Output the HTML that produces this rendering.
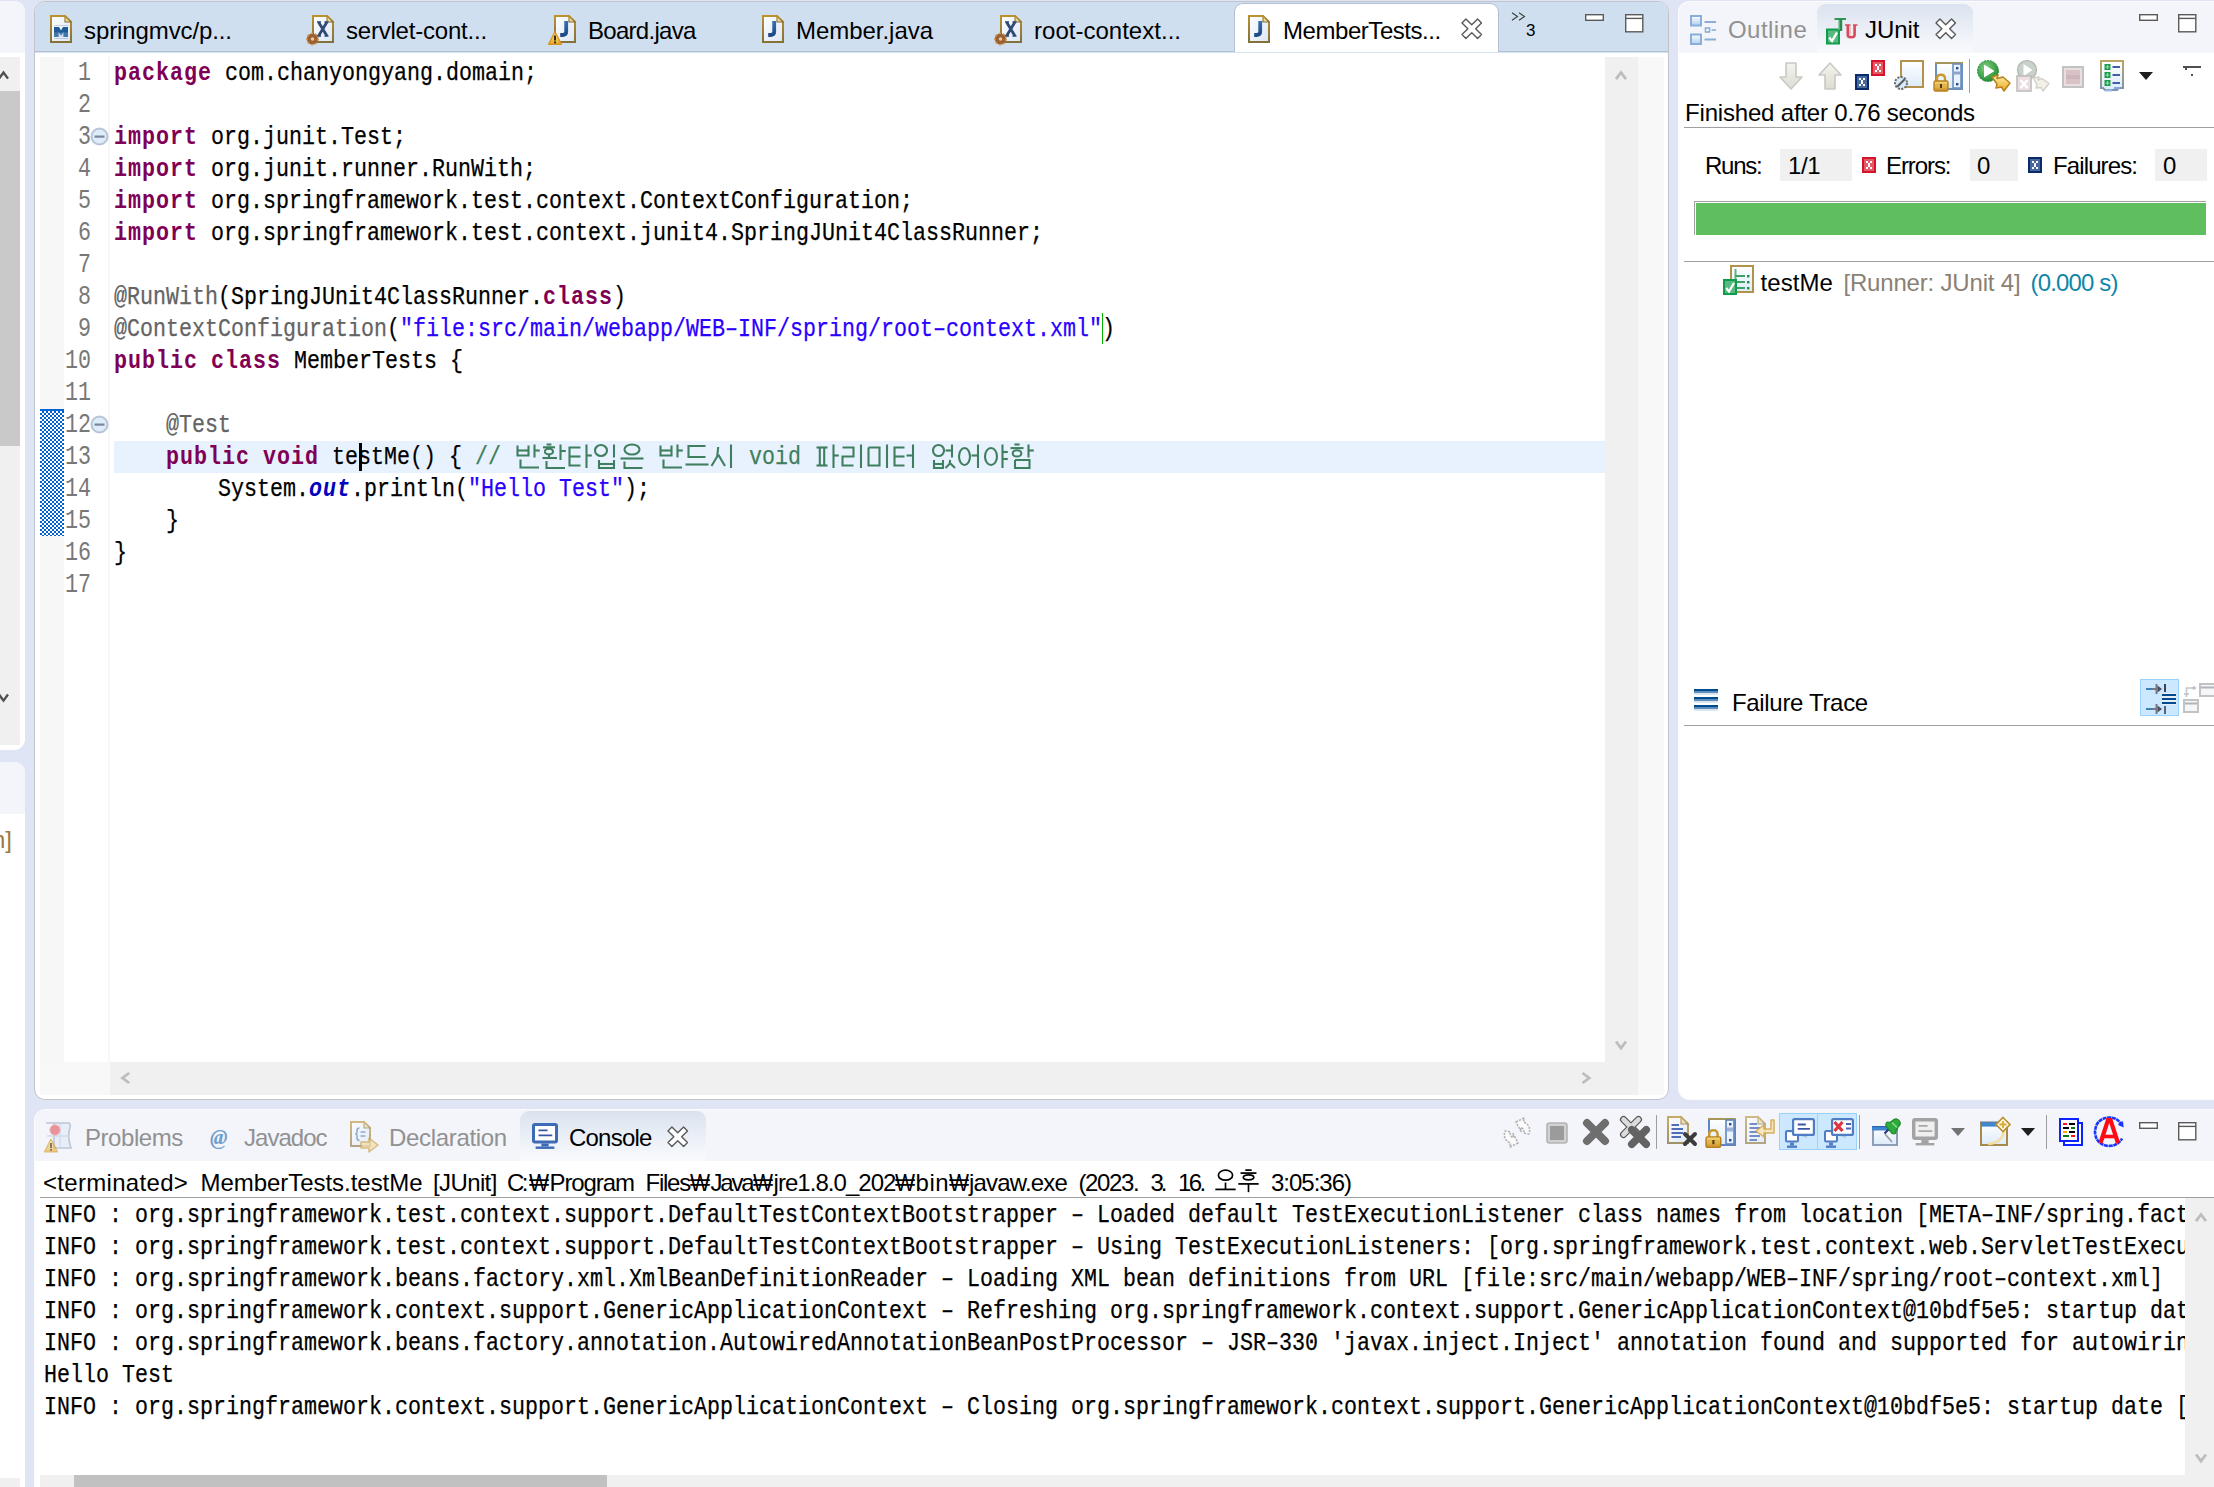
<!DOCTYPE html>
<html>
<head>
<meta charset="utf-8">
<title>Eclipse - MemberTests.java</title>
<style>
*{box-sizing:border-box;margin:0;padding:0}
html,body{width:2214px;height:1487px;overflow:hidden}
body{background:#e0e5f5;font-family:"Liberation Sans",sans-serif;font-size:24px;color:#000;position:relative}
.abs{position:absolute}
.t{position:absolute;white-space:pre;line-height:32px;height:32px}
.ui{font-family:"Liberation Sans",sans-serif;font-size:24px}
.gray{color:#919191}
svg{position:absolute;overflow:visible}
#ov{position:absolute;left:0;top:0;width:2214px;height:1487px;overflow:hidden}
.code{position:absolute;white-space:pre;font-family:"Liberation Mono",monospace;font-size:26px;line-height:32px;height:32px;transform:scaleX(.8332);transform-origin:0 0;color:#000;-webkit-text-stroke:.25px currentColor}
.kw{color:#7f0055;font-weight:bold;-webkit-text-stroke:0;letter-spacing:1.2px}
.ann{color:#646464}
.str{color:#2a00ff}
.cm{color:#3f7f5f}
.sf{color:#0000c0;font-style:italic;font-weight:bold;-webkit-text-stroke:0;letter-spacing:1.2px}
.ln{position:absolute;width:160px;text-align:right;white-space:pre;font-family:"Liberation Mono",monospace;font-size:28px;line-height:32px;height:32px;color:#787878;transform:scaleX(.7737);transform-origin:100% 0}
.hr{position:absolute;height:1px;background:#a0a0a0}
.sel{position:absolute;background:#cce8ff;border:1px solid #99d1ff}

</style>
</head>
<body>
<div class="abs" style="left:-12px;top:1px;width:37px;height:749px;background:#fff;border-radius:0 11px 11px 0;overflow:hidden"><div class="abs" style="left:0px;top:0px;width:37px;height:52px;background:#f3f5fb;"></div><div class="abs" style="left:0px;top:56px;width:32px;height:688px;background:#f0f0f0;"></div><div class="abs" style="left:0px;top:90px;width:32px;height:355px;background:#c9c9c9;"></div></div>
<div class="abs" style="left:-12px;top:762px;width:37px;height:740px;background:#fff;border-radius:0 11px 0 0;overflow:hidden"><div class="abs" style="left:0px;top:0px;width:37px;height:52px;background:#f3f5fb;"></div><div class="abs" style="left:0px;top:716px;width:32px;height:12px;background:#f0f0f0;"></div></div>
<div class="abs" style="left:34px;top:1px;width:1635px;height:1099px;background:#fff;border-radius:11px;border:1px solid #c2c4cc;overflow:hidden"><div class="abs" style="left:0px;top:0px;width:1635px;height:50px;background:#d0dff0;border-bottom:1px solid #b4bdd2"></div></div>
<div class="abs" style="left:35px;top:52px;width:1633px;height:1px;background:#d6e3f3;"></div>
<div class="abs" style="left:1234px;top:3px;width:265px;height:49px;background:#fff;border-radius:9px 9px 0 0;border:1px solid #b6bed2;border-bottom:none"></div>
<div class="abs" style="left:40px;top:57px;width:24px;height:1005px;background:#f7f7f7;"></div>
<div class="abs" style="left:108px;top:57px;width:2px;height:1005px;background:#f7f7f7;"></div>
<svg style="left:40px;top:409px" width="24" height="127" shape-rendering="crispEdges"><defs><pattern id="chk" width="4" height="4" patternUnits="userSpaceOnUse"><rect width="4" height="4" fill="#fffbee"/><rect width="2" height="2" fill="#0060d2"/><rect x="2" y="2" width="2" height="2" fill="#0060d2"/></pattern></defs><rect width="24" height="127" fill="url(#chk)"/><rect width="24" height="2" fill="#0066d8"/></svg>
<div class="abs" style="left:114px;top:441px;width:1491px;height:32px;background:#e8f2fe;"></div>
<div class="abs" style="left:1605px;top:57px;width:33px;height:1038px;background:#f0f0f0;"></div>
<div class="abs" style="left:1638px;top:57px;width:26px;height:1038px;background:#f8f8f8;"></div>
<div class="abs" style="left:110px;top:1062px;width:1495px;height:33px;background:#f0f0f0;"></div>
<div class="abs" style="left:40px;top:1062px;width:70px;height:33px;background:#f8f8f8;"></div>
<div class="abs" style="left:1678px;top:1px;width:560px;height:1099px;background:#fff;border-radius:11px 0 0 11px;border:1px solid #fbfbfe;overflow:hidden"><div class="abs" style="left:0px;top:0px;width:560px;height:51px;background:#f3f5fb;"></div></div>
<div class="abs" style="left:1817px;top:4px;width:156px;height:49px;background:linear-gradient(#dbe3ef,#f9fafd);border-radius:9px 9px 0 0"></div>
<div class="abs" style="left:34px;top:1109px;width:2200px;height:400px;background:#fff;border-radius:11px 0 0 0;border:1px solid #fbfbfe;overflow:hidden"><div class="abs" style="left:0px;top:0px;width:2200px;height:51px;background:#f3f5fb;"></div></div>
<div class="abs" style="left:520px;top:1111px;width:186px;height:50px;background:linear-gradient(#dbe3ef,#f9fafd);border-radius:9px 9px 0 0"></div>
<div id="ov">
<svg width="0" height="0" style="left:0;top:0"><defs>
<linearGradient id="gold" x1="0" y1="0" x2="0" y2="1"><stop offset="0" stop-color="#ba922f"/><stop offset="1" stop-color="#857038"/></linearGradient>
<linearGradient id="pg" x1="0" y1="0" x2="1" y2="1"><stop offset="0" stop-color="#ffffff"/><stop offset="1" stop-color="#dbe6f6"/></linearGradient>
<linearGradient id="jg" x1="0" y1="0" x2="0" y2="1"><stop offset="0" stop-color="#3570b4"/><stop offset="1" stop-color="#204a82"/></linearGradient>
<linearGradient id="bsq" x1="0" y1="0" x2="0" y2="1"><stop offset="0" stop-color="#ffffff"/><stop offset="1" stop-color="#a9cdf0"/></linearGradient>
<linearGradient id="lock" x1="0" y1="0" x2="0" y2="1"><stop offset="0" stop-color="#f6d878"/><stop offset="1" stop-color="#c8902a"/></linearGradient>
<linearGradient id="gborder" x1="0" y1="0" x2="0" y2="1"><stop offset="0" stop-color="#b9a763"/><stop offset="1" stop-color="#7d93b4"/></linearGradient>
<linearGradient id="arr" x1="0" y1="0" x2="0" y2="1"><stop offset="0" stop-color="#f4f3ee"/><stop offset="1" stop-color="#dedcd2"/></linearGradient>
<radialGradient id="grn" cx=".4" cy=".35" r=".7"><stop offset="0" stop-color="#7fd07f"/><stop offset="1" stop-color="#1f8a2f"/></radialGradient>
<linearGradient id="ylw" x1="0" y1="0" x2="0" y2="1"><stop offset="0" stop-color="#fff0a8"/><stop offset="1" stop-color="#e8a820"/></linearGradient>
<linearGradient id="win" x1="0" y1="0" x2="0" y2="1"><stop offset="0" stop-color="#ffffff"/><stop offset="1" stop-color="#dcebfa"/></linearGradient>
</defs></svg>
<svg style="left:50px;top:15px" width="22" height="28" viewBox="0 0 22 28" ><g opacity="1"><path d="M1.0 1.0 H15.0 L21.0 7.0 V27.0 H1.0 Z" fill="url(#pg)" stroke="url(#gold)" stroke-width="2"/><path d="M15.0 1.0 V7.0 H21.0 Z" fill="#ecd9a0" stroke="url(#gold)" stroke-width="1.2"/></g><path d="M4 22 V12 H9 L11 15.5 L13 12 H18 V22 H13.4 V17.2 L11 20.5 L8.6 17.2 V22 Z" fill="#1f5b98"/><rect x="4" y="17.5" width="14" height="4.5" fill="#8fb4d8" opacity=".32"/><rect x="4" y="10" width="14" height="1" fill="#1f5b98" opacity=".25"/><rect x="4" y="23" width="14" height="1" fill="#1f5b98" opacity=".25"/></svg>
<div id="t0" class="t ui" style="left:84px;top:15px;letter-spacing:-0.103px;">springmvc/p...</div>
<svg style="left:312px;top:15px" width="22" height="28" viewBox="0 0 22 28" ><g opacity="1"><path d="M1.0 1.0 H15.0 L21.0 7.0 V27.0 H1.0 Z" fill="url(#pg)" stroke="url(#gold)" stroke-width="2"/><path d="M15.0 1.0 V7.0 H21.0 Z" fill="#ecd9a0" stroke="url(#gold)" stroke-width="1.2"/></g><path d="M6.5 7 L15 21 M15 7 L6.5 21" stroke="#2f4a78" stroke-width="2.8" fill="none"/><path d="M5 7 H9 M12.5 7 H16.5 M5 21 H9 M12.5 21 H16.5" stroke="#2f4a78" stroke-width="1.6"/><circle cx="0.5" cy="24" r="5.6" fill="#9c5f2e"/><circle cx="0.5" cy="24" r="5.6" fill="none" stroke="#c99560" stroke-width="1.6" stroke-dasharray="2 2"/><circle cx="0.5" cy="24" r="1.8" fill="#e6c8a2"/></svg>
<div id="t1" class="t ui" style="left:346px;top:15px;letter-spacing:-0.210px;">servlet-cont...</div>
<svg style="left:554px;top:15px" width="22" height="28" viewBox="0 0 22 28" ><g opacity="1"><path d="M1.0 1.0 H15.0 L21.0 7.0 V27.0 H1.0 Z" fill="url(#pg)" stroke="url(#gold)" stroke-width="2"/><path d="M15.0 1.0 V7.0 H21.0 Z" fill="#ecd9a0" stroke="url(#gold)" stroke-width="1.2"/></g><path d="M12.2 6 V16.8 Q12.2 20 8.5 20 H6.2" fill="none" stroke="url(#jg)" stroke-width="3.8"/><g transform="translate(-6 16)"><path d="M7 0.8 L13.4 13.2 H0.6 Z" fill="url(#ylw)" stroke="#d8961c" stroke-width="1.4" stroke-linejoin="round"/><rect x="6" y="4.5" width="2" height="5" fill="#3a2a10"/><rect x="6" y="10.5" width="2" height="1.8" fill="#3a2a10"/></g></svg>
<div id="t2" class="t ui" style="left:588px;top:15px;letter-spacing:-0.711px;">Board.java</div>
<svg style="left:762px;top:15px" width="22" height="28" viewBox="0 0 22 28" ><g opacity="1"><path d="M1.0 1.0 H15.0 L21.0 7.0 V27.0 H1.0 Z" fill="url(#pg)" stroke="url(#gold)" stroke-width="2"/><path d="M15.0 1.0 V7.0 H21.0 Z" fill="#ecd9a0" stroke="url(#gold)" stroke-width="1.2"/></g><path d="M12.2 6 V16.8 Q12.2 20 8.5 20 H6.2" fill="none" stroke="url(#jg)" stroke-width="3.8"/></svg>
<div id="t3" class="t ui" style="left:796px;top:15px;letter-spacing:-0.037px;">Member.java</div>
<svg style="left:1000px;top:15px" width="22" height="28" viewBox="0 0 22 28" ><g opacity="1"><path d="M1.0 1.0 H15.0 L21.0 7.0 V27.0 H1.0 Z" fill="url(#pg)" stroke="url(#gold)" stroke-width="2"/><path d="M15.0 1.0 V7.0 H21.0 Z" fill="#ecd9a0" stroke="url(#gold)" stroke-width="1.2"/></g><path d="M6.5 7 L15 21 M15 7 L6.5 21" stroke="#2f4a78" stroke-width="2.8" fill="none"/><path d="M5 7 H9 M12.5 7 H16.5 M5 21 H9 M12.5 21 H16.5" stroke="#2f4a78" stroke-width="1.6"/><circle cx="0.5" cy="24" r="5.6" fill="#9c5f2e"/><circle cx="0.5" cy="24" r="5.6" fill="none" stroke="#c99560" stroke-width="1.6" stroke-dasharray="2 2"/><circle cx="0.5" cy="24" r="1.8" fill="#e6c8a2"/></svg>
<div id="t4" class="t ui" style="left:1034px;top:15px;letter-spacing:0.018px;">root-context...</div>
<svg style="left:1248px;top:15px" width="22" height="28" viewBox="0 0 22 28" ><g opacity="1"><path d="M1.0 1.0 H15.0 L21.0 7.0 V27.0 H1.0 Z" fill="url(#pg)" stroke="url(#gold)" stroke-width="2"/><path d="M15.0 1.0 V7.0 H21.0 Z" fill="#ecd9a0" stroke="url(#gold)" stroke-width="1.2"/></g><path d="M12.2 6 V16.8 Q12.2 20 8.5 20 H6.2" fill="none" stroke="url(#jg)" stroke-width="3.8"/></svg>
<div id="t5" class="t ui" style="left:1283px;top:15px;letter-spacing:-0.448px;">MemberTests...</div>
<svg style="left:1462px;top:19px" width="19.5" height="19.5" viewBox="0 0 19.5 19.5" ><path d="M0 3.9 L3.9 0 L9.75 5.85 L15.6 0 L19.5 3.9 L13.65 9.75 L19.5 15.6 L15.6 19.5 L9.75 13.65 L3.9 19.5 L0 15.6 L5.85 9.75 Z" fill="#fff" stroke="#5a5a5a" stroke-width="1.4" stroke-linejoin="round"/></svg>
<svg style="left:1510.5px;top:12px" width="16" height="9" viewBox="0 0 16 9" ><path d="M1 .8 L6.5 4.5 L1 8.2 M8 .8 L13.5 4.5 L8 8.2 " fill="none" stroke="#3c3c3c" stroke-width="1.1"/></svg>
<div id="t6" class="t ui" style="left:1526px;top:15px;letter-spacing:0.000px;font-size:17px">3</div>
<svg style="left:1585px;top:14px" width="19" height="7" viewBox="0 0 19 7" ><rect x=".7" y=".7" width="17.6" height="5.6" fill="#fff" stroke="#5a5a5a" stroke-width="1.4"/></svg>
<svg style="left:1624.5px;top:14px" width="18.5" height="18.5" viewBox="0 0 18.5 18.5" ><rect x=".7" y=".7" width="17.1" height="17.1" fill="#fff" stroke="#5a5a5a" stroke-width="1.4"/><path d="M.7 4.4 H17.8" stroke="#5a5a5a" stroke-width="1.4"/></svg>
<div class="ln" style="left:-69.5px;top:57px">1</div>
<div class="code" style="left:114px;top:57px"><span class="kw">package</span> com.chanyongyang.domain;</div>
<div class="ln" style="left:-69.5px;top:89px">2</div>
<div class="ln" style="left:-69.5px;top:121px">3</div>
<div class="code" style="left:114px;top:121px"><span class="kw">import</span> org.junit.Test;</div>
<div class="ln" style="left:-69.5px;top:153px">4</div>
<div class="code" style="left:114px;top:153px"><span class="kw">import</span> org.junit.runner.RunWith;</div>
<div class="ln" style="left:-69.5px;top:185px">5</div>
<div class="code" style="left:114px;top:185px"><span class="kw">import</span> org.springframework.test.context.ContextConfiguration;</div>
<div class="ln" style="left:-69.5px;top:217px">6</div>
<div class="code" style="left:114px;top:217px"><span class="kw">import</span> org.springframework.test.context.junit4.SpringJUnit4ClassRunner;</div>
<div class="ln" style="left:-69.5px;top:249px">7</div>
<div class="ln" style="left:-69.5px;top:281px">8</div>
<div class="code" style="left:114px;top:281px"><span class="ann">@RunWith</span>(SpringJUnit4ClassRunner.<span class="kw">class</span>)</div>
<div class="ln" style="left:-69.5px;top:313px">9</div>
<div class="code" style="left:114px;top:313px"><span class="ann">@ContextConfiguration</span>(<span class="str">"file:src/main/webapp/WEB–INF/spring/root–context.xml"</span>)</div>
<div class="ln" style="left:-69.5px;top:345px">10</div>
<div class="code" style="left:114px;top:345px"><span class="kw">public</span> <span class="kw">class</span> MemberTests {</div>
<div class="ln" style="left:-69.5px;top:377px">11</div>
<div class="ln" style="left:-69.5px;top:409px">12</div>
<div class="code" style="left:114px;top:409px">    <span class="ann">@Test</span></div>
<div class="ln" style="left:-69.5px;top:441px">13</div>
<div class="code" style="left:114px;top:441px">    <span class="kw">public</span> <span class="kw">void</span> testMe() { <span class="cm">// </span></div>
<div class="ln" style="left:-69.5px;top:473px">14</div>
<div class="code" style="left:114px;top:473px">        System.<span class="sf">out</span>.println(<span class="str">"Hello Test"</span>);</div>
<div class="ln" style="left:-69.5px;top:505px">15</div>
<div class="code" style="left:114px;top:505px">    }</div>
<div class="ln" style="left:-69.5px;top:537px">16</div>
<div class="code" style="left:114px;top:537px">}</div>
<div class="ln" style="left:-69.5px;top:569px">17</div>
<svg style="left:515px;top:440px" width="520" height="32" viewBox="0 0 520 32"><g fill="none" stroke="#3f7f5f" stroke-width="2.1"><path transform="translate(0 0)" d="M2.5 5.5 L2.5 15.5 L13.5 15.5 L13.5 5.5"/>
<path transform="translate(0 0)" d="M2.5 10.5 L13.5 10.5"/>
<path transform="translate(0 0)" d="M19.5 4.5 L19.5 17.5"/>
<path transform="translate(0 0)" d="M19.5 10.5 L24.8 10.5"/>
<path transform="translate(0 0)" d="M5.5 19.5 L5.5 27.5 L24.0 27.5"/>
<path transform="translate(26 0)" d="M5.6 4.5 L10.4 4.5"/>
<path transform="translate(26 0)" d="M2.0 7.3 L14.0 7.3"/>
<path transform="translate(26 0)" d="M4.0 11.5 a4.0 2.5 0 1 0 7.9 0 a4.0 2.5 0 1 0 -7.9 0"/>
<path transform="translate(26 0)" d="M1.5 18.0 L16.0 18.0"/>
<path transform="translate(26 0)" d="M8.0 14.5 L8.0 18.0"/>
<path transform="translate(26 0)" d="M19.5 4.5 L19.5 20.0"/>
<path transform="translate(26 0)" d="M19.5 11.0 L24.8 11.0"/>
<path transform="translate(26 0)" d="M5.5 21.0 L5.5 28.0 L24.0 28.0"/>
<path transform="translate(52 0)" d="M13.5 7.5 L2.5 7.5 L2.5 25.5 L13.5 25.5"/>
<path transform="translate(52 0)" d="M2.5 16.5 L13.5 16.5"/>
<path transform="translate(52 0)" d="M19.5 4.5 L19.5 28.0"/>
<path transform="translate(52 0)" d="M19.5 15.5 L24.8 15.5"/>
<path transform="translate(78 0)" d="M2.0 10.5 a6.0 5.5 0 1 0 12.0 0 a6.0 5.5 0 1 0 -12.0 0"/>
<path transform="translate(78 0)" d="M21.0 4.5 L21.0 17.5"/>
<path transform="translate(78 0)" d="M6.0 20.0 L6.0 28.0 L21.0 28.0 L21.0 20.0"/>
<path transform="translate(78 0)" d="M6.0 24.0 L21.0 24.0"/>
<path transform="translate(104 0)" d="M5.5 9.5 a7.5 5.0 0 1 0 15.0 0 a7.5 5.0 0 1 0 -15.0 0"/>
<path transform="translate(104 0)" d="M1.5 18.5 L24.5 18.5"/>
<path transform="translate(104 0)" d="M5.5 21.5 L5.5 28.0 L23.5 28.0"/>
<path transform="translate(143 0)" d="M2.5 5.5 L2.5 15.5 L13.5 15.5 L13.5 5.5"/>
<path transform="translate(143 0)" d="M2.5 10.5 L13.5 10.5"/>
<path transform="translate(143 0)" d="M19.5 4.5 L19.5 17.5"/>
<path transform="translate(143 0)" d="M19.5 10.5 L24.8 10.5"/>
<path transform="translate(143 0)" d="M5.5 19.5 L5.5 27.5 L24.0 27.5"/>
<path transform="translate(169 0)" d="M21.5 6.0 L4.5 6.0 L4.5 17.0 L21.5 17.0"/>
<path transform="translate(169 0)" d="M1.5 24.5 L24.5 24.5"/>
<path transform="translate(195 0)" d="M8.2 7.0 L7.2 16.5 L1.5 26.0"/>
<path transform="translate(195 0)" d="M8.2 14.6 L15.0 26.0"/>
<path transform="translate(195 0)" d="M21.0 4.5 L21.0 28.0"/>
<path transform="translate(299 0)" d="M2.5 7.5 L13.5 7.5"/>
<path transform="translate(299 0)" d="M2.5 25.5 L13.5 25.5"/>
<path transform="translate(299 0)" d="M5.8 7.5 L5.8 25.5"/>
<path transform="translate(299 0)" d="M10.2 7.5 L10.2 25.5"/>
<path transform="translate(299 0)" d="M19.5 4.5 L19.5 28.0"/>
<path transform="translate(299 0)" d="M19.5 15.5 L24.8 15.5"/>
<path transform="translate(325 0)" d="M2.5 7.5 L13.5 7.5 L13.5 16.5 L2.5 16.5 L2.5 25.5 L13.5 25.5"/>
<path transform="translate(325 0)" d="M21.0 4.5 L21.0 28.0"/>
<path transform="translate(351 0)" d="M2.5 7.5 L13.5 7.5 L13.5 25.5 L2.5 25.5 L2.5 7.5"/>
<path transform="translate(351 0)" d="M21.0 4.5 L21.0 28.0"/>
<path transform="translate(377 0)" d="M12.5 7.5 L2.5 7.5 L2.5 25.5 L12.5 25.5"/>
<path transform="translate(377 0)" d="M2.5 16.5 L12.5 16.5"/>
<path transform="translate(377 0)" d="M21.0 4.5 L21.0 28.0"/>
<path transform="translate(377 0)" d="M14.5 15.5 L21.0 15.5"/>
<path transform="translate(416 0)" d="M2.0 10.5 a5.5 5.5 0 1 0 11.0 0 a5.5 5.5 0 1 0 -11.0 0"/>
<path transform="translate(416 0)" d="M21.0 4.5 L21.0 17.5"/>
<path transform="translate(416 0)" d="M14.5 10.5 L21.0 10.5"/>
<path transform="translate(416 0)" d="M3.0 20.0 L3.0 28.0 L12.0 28.0 L12.0 20.0"/>
<path transform="translate(416 0)" d="M3.0 24.0 L12.0 24.0"/>
<path transform="translate(416 0)" d="M19.2 20.0 L18.5 24.0 L14.5 28.0"/>
<path transform="translate(416 0)" d="M19.2 23.2 L24.0 28.0"/>
<path transform="translate(442 0)" d="M2.0 16.5 a5.5 8.5 0 1 0 11.0 0 a5.5 8.5 0 1 0 -11.0 0"/>
<path transform="translate(442 0)" d="M21.0 4.5 L21.0 28.0"/>
<path transform="translate(442 0)" d="M14.5 15.5 L21.0 15.5"/>
<path transform="translate(468 0)" d="M2.0 16.5 a6.0 8.5 0 1 0 12.0 0 a6.0 8.5 0 1 0 -12.0 0"/>
<path transform="translate(468 0)" d="M19.5 4.5 L19.5 28.0"/>
<path transform="translate(468 0)" d="M19.5 12.0 L24.8 12.0"/>
<path transform="translate(468 0)" d="M19.5 19.0 L24.8 19.0"/>
<path transform="translate(494 0)" d="M5.4 4.5 L10.6 4.5"/>
<path transform="translate(494 0)" d="M1.5 8.1 L14.5 8.1"/>
<path transform="translate(494 0)" d="M3.7 13.4 a4.3 3.1 0 1 0 8.6 0 a4.3 3.1 0 1 0 -8.6 0"/>
<path transform="translate(494 0)" d="M19.5 4.5 L19.5 17.5"/>
<path transform="translate(494 0)" d="M19.5 10.5 L24.8 10.5"/>
<path transform="translate(494 0)" d="M6.0 20.0 L20.5 20.0 L20.5 28.0 L6.0 28.0 L6.0 20.0"/></g></svg>
<div class="code" style="left:749px;top:441px"><span class="cm">void</span></div>
<div class="abs" style="left:358.5px;top:443px;width:3px;height:28px;background:#000;"></div>
<div class="abs" style="left:1102px;top:313px;width:1px;height:31px;background:#00b400;"></div>
<svg style="left:89.5px;top:126.5px" width="19" height="19" viewBox="0 0 19 19" ><circle cx="9.5" cy="9.5" r="8" fill="#dcecf9" stroke="#b4c0d4" stroke-width="2" opacity=".95"/><rect x="4.5" y="8.5" width="10" height="2.2" fill="#7b859a"/></svg>
<svg style="left:89.5px;top:414.5px" width="19" height="19" viewBox="0 0 19 19" ><circle cx="9.5" cy="9.5" r="8" fill="#dcecf9" stroke="#b4c0d4" stroke-width="2" opacity=".95"/><rect x="4.5" y="8.5" width="10" height="2.2" fill="#7b859a"/></svg>
<svg style="left:1614.5px;top:70.5px" width="14" height="14" viewBox="0 0 14 14" ><path d="M1 8.2 L6 1.5 L11 8.2" fill="none" stroke="#bdbdbd" stroke-width="2.8"/></svg>
<svg style="left:1614.5px;top:1039.5px" width="14" height="14" viewBox="0 0 14 14" ><path d="M1 1.5 L6 8.2 L11 1.5" fill="none" stroke="#bdbdbd" stroke-width="2.8"/></svg>
<svg style="left:121px;top:1071.5px" width="14" height="14" viewBox="0 0 14 14" ><path d="M8.2 1 L1.5 6 L8.2 11" fill="none" stroke="#bdbdbd" stroke-width="2.8"/></svg>
<svg style="left:1581px;top:1071.5px" width="14" height="14" viewBox="0 0 14 14" ><path d="M1.5 1 L8.2 6 L1.5 11" fill="none" stroke="#bdbdbd" stroke-width="2.8"/></svg>
<svg style="left:-2px;top:71px" width="13" height="13" viewBox="0 0 13 13" ><path d="M1 7.6 L5.5 1.5 L10 7.6" fill="none" stroke="#505050" stroke-width="2.4"/></svg>
<svg style="left:-2px;top:693px" width="13" height="13" viewBox="0 0 13 13" ><path d="M1 1.5 L5.5 7.6 L10 1.5" fill="none" stroke="#505050" stroke-width="2.4"/></svg>
<div id="t7" class="t ui" style="left:-8px;top:824px;letter-spacing:0.000px;color:#a07840">n]</div>
<svg style="left:1690px;top:15px" width="27" height="30" viewBox="0 0 27 30" ><g opacity=".9"><rect x="1" y="1" width="10" height="9.5" fill="url(#bsq)" stroke="#7fa7d6" stroke-width="2"/><rect x="1" y="19.5" width="10" height="9.5" fill="url(#bsq)" stroke="#7fa7d6" stroke-width="2"/><path d="M14.5 7 H26 M14.5 24.5 H26" stroke="#7fa7d6" stroke-width="2"/><rect x="15.5" y="13" width="4" height="4" fill="#fff" stroke="#7fa7d6" stroke-width="1.6"/><path d="M21.5 15 H26" stroke="#7fa7d6" stroke-width="1.6"/></g></svg>
<div id="t8" class="t ui gray" style="left:1728px;top:14px;letter-spacing:0.454px;">Outline</div>
<svg style="left:1826px;top:18px" width="32" height="27" viewBox="0 0 32 27" ><g transform="translate(0 10.5)"><rect width="14" height="16" fill="#0f9d4c"/><rect x="2" y="2" width="10" height="12" fill="#58b982"/><path d="M3.2 8.96 L6 12.48 L11 4" fill="none" stroke="#fff" stroke-width="2.3"/></g><path d="M8.5 1 H20" stroke="#2e9a55" stroke-width="2"/><path d="M14.5 1 V13" stroke="#2c8a4e" stroke-width="3.4"/><path d="M13 2 V12" stroke="#7cc79a" stroke-width="1.2"/><path d="M19 7 H24.5 M27 7 H31.5" stroke="#d84a5a" stroke-width="1.6"/><path d="M21.8 7 V17 Q21.8 19.2 25 19.2 Q28.6 19.2 28.6 17 V7" fill="none" stroke="#d84a5a" stroke-width="2.6"/><path d="M24 8 V17" stroke="#f0b0b8" stroke-width="1.5"/></svg>
<div id="t9" class="t ui" style="left:1865px;top:14px;letter-spacing:-0.042px;">JUnit</div>
<svg style="left:1935.5px;top:19px" width="19.5" height="19.5" viewBox="0 0 19.5 19.5" ><path d="M0 3.9 L3.9 0 L9.75 5.85 L15.6 0 L19.5 3.9 L13.65 9.75 L19.5 15.6 L15.6 19.5 L9.75 13.65 L3.9 19.5 L0 15.6 L5.85 9.75 Z" fill="#fff" stroke="#5a5a5a" stroke-width="1.4" stroke-linejoin="round"/></svg>
<svg style="left:2139px;top:14px" width="19" height="7" viewBox="0 0 19 7" ><rect x=".7" y=".7" width="17.6" height="5.6" fill="#fff" stroke="#5a5a5a" stroke-width="1.4"/></svg>
<svg style="left:2178px;top:14px" width="18.5" height="18.5" viewBox="0 0 18.5 18.5" ><rect x=".7" y=".7" width="17.1" height="17.1" fill="#fff" stroke="#5a5a5a" stroke-width="1.4"/><path d="M.7 4.4 H17.8" stroke="#5a5a5a" stroke-width="1.4"/></svg>
<svg style="left:1779px;top:62px" width="24" height="28" viewBox="0 0 24 28" ><path d="M7 1 H17 V15 H23 L12 27 L1 15 H7 Z" fill="url(#arr)" stroke="#c9c9c4" stroke-width="1.6" stroke-linejoin="round"/></svg>
<svg style="left:1818px;top:62px" width="24" height="28" viewBox="0 0 24 28" ><path d="M7 27 H17 V13 H23 L12 1 L1 13 H7 Z" fill="url(#arr)" stroke="#c9c9c4" stroke-width="1.6" stroke-linejoin="round"/></svg>
<svg style="left:1855px;top:60px" width="30" height="30" viewBox="0 0 30 30" ><g transform="translate(0 14)" shape-rendering="crispEdges"><rect width="14" height="16" fill="#0b2a6c"/><rect x="2" y="2" width="10" height="12" fill="#49699c"/><path d="M4 4h2v2h-2z M8 4h2v2h-2z M6 6h2v4h-2z M4 10h2v2h-2z M8 10h2v2h-2z" fill="#fff"/></g><g transform="translate(16 0)" shape-rendering="crispEdges"><rect width="14" height="16" fill="#d3142a"/><rect x="2" y="2" width="10" height="12" fill="#e45a68"/><path d="M4 4h2v2h-2z M8 4h2v2h-2z M6 6h2v4h-2z M4 10h2v2h-2z M8 10h2v2h-2z" fill="#fff"/></g></svg>
<svg style="left:1894px;top:60px" width="30" height="30" viewBox="0 0 30 30" ><rect x="7" y="1" width="22" height="26" fill="url(#win)" stroke="#b3924c" stroke-width="2"/><circle cx="7" cy="23" r="6" fill="#d8ecfa" stroke="#6f6f6f" stroke-width="2" stroke-dasharray="2.2 1.2"/><path d="M3.2 26.8 L10.8 19.2" stroke="#5a5a5a" stroke-width="2"/></svg>
<svg style="left:1933px;top:62px" width="30" height="30" viewBox="0 0 30 30" ><rect x="3" y="1" width="26" height="26" fill="url(#win)" stroke="#6d8fc0" stroke-width="2"/><path d="M2 1 H30" stroke="#a5965a" stroke-width="2"/><rect x="20" y="2" width="8" height="24" fill="#eaf2fb" stroke="#6d8fc0" stroke-width="1.6"/><rect x="23" y="5" width="2.4" height="2.4" fill="#274a9a"/><rect x="23" y="21" width="2.4" height="2.4" fill="#274a9a"/><rect x="21" y="9.5" width="6" height="3" fill="#8ea4c8"/><g transform="translate(0 11.5) scale(1.0)"><path d="M4 8 V5.2 Q4 1.2 8 1.2 Q12 1.2 12 5.2 V8" fill="none" stroke="#c9982e" stroke-width="2.4"/><rect x="1" y="7.5" width="14" height="10" rx="1.5" fill="url(#lock)" stroke="#b8801e" stroke-width="1.4"/><path d="M2.5 11 H13.5 M2.5 14 H13.5" stroke="#e0b04a" stroke-width="1"/><rect x="7" y="10.5" width="2" height="4" fill="#5a3a08"/></g></svg>
<div class="abs" style="left:1969px;top:59px;width:1px;height:34px;background:#9d9d9d"></div>
<svg style="left:1977px;top:60px" width="34" height="32" viewBox="0 0 34 32" ><circle cx="11" cy="11" r="10.5" fill="url(#grn)" stroke="#2a8c3a" stroke-width="1" stroke-dasharray="2 1"/><path d="M7 4.5 L17.5 11 L7 17.5 Z" fill="#fff"/><path d="M15 17 L21 15 L20 18.5 L26 17 L33 23 L27 31 L24.5 27 L19 28 L20 24 Z" fill="url(#ylw)" stroke="#b8801e" stroke-width="1.5" stroke-linejoin="round"/></svg>
<svg style="left:2016px;top:60px" width="34" height="32" viewBox="0 0 34 32" ><g opacity=".75"><circle cx="11" cy="10" r="9.5" fill="#b8c4b8" stroke="#9a9a9a" stroke-width="1.2"/><path d="M7.5 4 L16.5 10 L7.5 16 Z" fill="#fff"/><rect x="1" y="16" width="14" height="15" fill="#e6d4d8" stroke="#a8a8a8" stroke-width="1.6"/><path d="M4.5 20 L11.5 28 M11.5 20 L4.5 28" stroke="#fff" stroke-width="2.4"/><path d="M17 18 L23 17 L22 20 L26 18.5 L33 23.5 L27 31 L25 27.5 L20 28 L21 24.5 Z" fill="#eeece2" stroke="#c4c2b8" stroke-width="1.4" stroke-linejoin="round"/></g></svg>
<svg style="left:2062px;top:66px" width="22" height="22" viewBox="0 0 22 22" ><rect x="1" y="1" width="20" height="20" fill="#eadfe0" stroke="#c2c2c2" stroke-width="2"/><rect x="4" y="4" width="14" height="14" fill="#d8c2c6"/><rect x="4" y="9" width="14" height="4" fill="#cdb6bb"/></svg>
<svg style="left:2100px;top:60px" width="24" height="32" viewBox="0 0 24 32" ><path d="M1 1 H23 V28 H19 L17 30 H5 L3 28 H1 Z" fill="url(#win)" stroke="url(#gborder)" stroke-width="2"/><rect x="4.5" y="4" width="6" height="6" fill="#1f9a4a"/><path d="M5.5 7 H9.5 M7.5 5 V9" stroke="#8fdcaa" stroke-width="1.2"/><path d="M12.5 7 H20" stroke="#3f5fae" stroke-width="2"/><rect x="4.5" y="12" width="6" height="6" fill="#1f9a4a"/><path d="M5.5 15 H9.5 M7.5 13 V17" stroke="#8fdcaa" stroke-width="1.2"/><path d="M12.5 15 H20" stroke="#3f5fae" stroke-width="2"/><rect x="4.5" y="20" width="6" height="6" fill="#1f9a4a"/><path d="M5.5 23 H9.5 M7.5 21 V25" stroke="#8fdcaa" stroke-width="1.2"/><path d="M12.5 23 H20" stroke="#3f5fae" stroke-width="2"/><path d="M5 30.5 H12" stroke="#9bbbe8" stroke-width="2"/><path d="M14 28 H20" stroke="#86a6da" stroke-width="2"/></svg>
<svg style="left:2139px;top:72px" width="14" height="8" viewBox="0 0 14 8" ><path d="M0 0 H14 L7.0 8 Z" fill="#1e1e1e"/></svg>
<svg style="left:2183px;top:66px" width="19" height="12" viewBox="0 0 19 12" ><path d="M0 1 H18" stroke="#4f4f4f" stroke-width="2"/><rect x="2" y="2" width="2" height="2" fill="#4f4f4f"/><rect x="8" y="8" width="2" height="2" fill="#4f4f4f"/></svg>
<div id="t10" class="t ui" style="left:1685px;top:96.5px;letter-spacing:-0.183px;">Finished after 0.76 seconds</div>
<div class="hr" style="left:1684px;top:127px;width:540px"></div>
<div class="abs" style="left:1780px;top:149px;width:72px;height:32px;background:#f0f0f0;"></div>
<div class="abs" style="left:1970px;top:149px;width:48px;height:32px;background:#f0f0f0;"></div>
<div class="abs" style="left:2155px;top:149px;width:52px;height:32px;background:#f0f0f0;"></div>
<div id="t11" class="t ui" style="left:1705px;top:150px;letter-spacing:-1.267px;">Runs:</div>
<div id="t12" class="t ui" style="left:1788px;top:150px;letter-spacing:-0.350px;">1/1</div>
<svg style="left:1862px;top:157px" width="14" height="16" viewBox="0 0 14 16" ><g transform="translate(0 0)" shape-rendering="crispEdges"><rect width="14" height="16" fill="#d3142a"/><rect x="2" y="2" width="10" height="12" fill="#e45a68"/><path d="M4 4h2v2h-2z M8 4h2v2h-2z M6 6h2v4h-2z M4 10h2v2h-2z M8 10h2v2h-2z" fill="#fff"/></g></svg>
<div id="t13" class="t ui" style="left:1886px;top:150px;letter-spacing:-1.077px;">Errors:</div>
<div id="t14" class="t ui" style="left:1977px;top:150px;letter-spacing:0.000px;">0</div>
<svg style="left:2028px;top:157px" width="14" height="16" viewBox="0 0 14 16" ><g transform="translate(0 0)" shape-rendering="crispEdges"><rect width="14" height="16" fill="#0b2a6c"/><rect x="2" y="2" width="10" height="12" fill="#49699c"/><path d="M4 4h2v2h-2z M8 4h2v2h-2z M6 6h2v4h-2z M4 10h2v2h-2z M8 10h2v2h-2z" fill="#fff"/></g></svg>
<div id="t15" class="t ui" style="left:2053px;top:150px;letter-spacing:-0.886px;">Failures:</div>
<div id="t16" class="t ui" style="left:2163px;top:150px;letter-spacing:0.000px;">0</div>
<div class="abs" style="left:1694px;top:201px;width:512px;height:34px;background:transparent;border-left:1px solid #a0a0a0;border-top:1px solid #a0a0a0"></div>
<div class="abs" style="left:1696px;top:203px;width:510px;height:32px;background:#5fbf5f;"></div>
<div class="hr" style="left:1684px;top:261px;width:540px"></div>
<svg style="left:1723px;top:265px" width="31" height="30" viewBox="0 0 31 30" ><rect x="8" y="1" width="22" height="26" fill="url(#win)" stroke="#b3924c" stroke-width="2"/><path d="M12.5 4 V24" stroke="#5fb584" stroke-width="2"/><path d="M12.5 11 H22 M12.5 17 H22 M12.5 23 H22" stroke="#3fa068" stroke-width="2"/><rect x="24" y="10" width="2.4" height="2.4" fill="#1f8a4a"/><rect x="24" y="16" width="2.4" height="2.4" fill="#1f8a4a"/><rect x="24" y="22" width="2.4" height="2.4" fill="#1f8a4a"/><g transform="translate(0 14)"><rect width="14" height="16" fill="#0f9d4c"/><rect x="2" y="2" width="10" height="12" fill="#58b982"/><path d="M3.2 8.96 L6 12.48 L11 4" fill="none" stroke="#fff" stroke-width="2.3"/></g></svg>
<div id="t17" class="t ui" style="left:1760.5px;top:266.5px;letter-spacing:0.085px;">testMe</div>
<div id="t18" class="t ui" style="left:1843.5px;top:266.5px;letter-spacing:-0.188px;color:#8a8174">[Runner: JUnit 4]</div>
<div id="t19" class="t ui" style="left:2030.5px;top:266.5px;letter-spacing:-0.849px;color:#0f86a8">(0.000 s)</div>
<svg style="left:1694px;top:689px" width="24" height="22" viewBox="0 0 24 22" shape-rendering="crispEdges"><rect x="0" y="0" width="24" height="2" fill="#004a90"/><rect x="0" y="2" width="24" height="2" fill="#5a8cbc"/><rect x="0" y="4" width="24" height="2" fill="#d9e5f0"/><rect x="0" y="8" width="24" height="2" fill="#004a90"/><rect x="0" y="10" width="24" height="2" fill="#5a8cbc"/><rect x="0" y="12" width="24" height="2" fill="#d9e5f0"/><rect x="0" y="16" width="24" height="2" fill="#004a90"/><rect x="0" y="18" width="24" height="2" fill="#5a8cbc"/><rect x="0" y="20" width="24" height="2" fill="#d9e5f0"/></svg>
<div id="t20" class="t ui" style="left:1732px;top:686.5px;letter-spacing:-0.325px;">Failure Trace</div>
<div class="sel" style="left:2140px;top:679px;width:39px;height:37px"></div>
<svg style="left:2140px;top:679px" width="39" height="37" viewBox="0 0 39 37" ><path d="M6 10 H12" stroke="#3c82b8" stroke-width="2"/><path d="M12 10 H17" stroke="#74788a" stroke-width="2"/><path d="M16.5 5 V15" stroke="#74788a" stroke-width="2"/><path d="M17.5 6.5 L22 10 L17.5 13.5 Z" fill="#4b4f58"/><path d="M6 30 H12" stroke="#3c82b8" stroke-width="2"/><path d="M12 30 H17" stroke="#74788a" stroke-width="2"/><path d="M16.5 25 V35" stroke="#74788a" stroke-width="2"/><path d="M17.5 26.5 L22 30 L17.5 33.5 Z" fill="#4b4f58"/><path d="M25 5 V13" stroke="#3a4260" stroke-width="2"/><path d="M25 27 V35" stroke="#5a6280" stroke-width="2"/><rect x="22" y="14" width="14" height="12" fill="#e8eef4"/><rect x="22" y="15" width="14" height="2" fill="#004a90"/><rect x="22" y="19" width="14" height="2" fill="#004a90"/><rect x="22" y="23" width="14" height="2" fill="#004a90"/></svg>
<svg style="left:2183px;top:683px" width="32" height="32" viewBox="0 0 32 32" ><g opacity=".9"><rect x="17" y="1" width="15" height="12" fill="#f4f6f8" stroke="#bdbdbd" stroke-width="2"/><path d="M18 4.5 H31" stroke="#a9acb4" stroke-width="2"/><rect x="1" y="17" width="14" height="12" fill="#f4f6f8" stroke="#bdbdbd" stroke-width="2"/><path d="M2 20.5 H14" stroke="#a9acb4" stroke-width="2"/><path d="M3.5 14 V5 H13" fill="none" stroke="#c2c2c2" stroke-width="1.6"/><path d="M9 5 H13 M11 3 V7 M1 11 H6" stroke="#b4bcc6" stroke-width="1.4"/></g></svg>
<div class="hr" style="left:1684px;top:725px;width:540px"></div>
<svg style="left:44px;top:1121px" width="29" height="32" viewBox="0 0 29 32" ><g opacity=".55"><path d="M2 2 H24 Q27 2 26 6 Q23 16 27 27 H10 V2" fill="#dfeaf7" stroke="#8fa0b8" stroke-width="1.6"/><path d="M3 15 H25 M16 3 V27" stroke="#b9c8e0" stroke-width="1.4"/><circle cx="11" cy="9" r="5.2" fill="#e0424f" stroke="#f08a92" stroke-width="1"/></g><g opacity=".6"><g transform="translate(0 17.5)"><path d="M7 0.8 L13.4 13.2 H0.6 Z" fill="url(#ylw)" stroke="#d8961c" stroke-width="1.4" stroke-linejoin="round"/><rect x="6" y="4.5" width="2" height="5" fill="#3a2a10"/><rect x="6" y="10.5" width="2" height="1.8" fill="#3a2a10"/></g></g></svg>
<div id="t21" class="t ui gray" style="left:85px;top:1122px;letter-spacing:-0.450px;">Problems</div>
<div class="t" style="left:210px;top:1121px;font-family:'Liberation Serif',serif;font-size:21px;font-weight:bold;font-style:italic;color:#6f9fca">@</div>
<div id="t22" class="t ui gray" style="left:244px;top:1122px;letter-spacing:-0.983px;">Javadoc</div>
<svg style="left:350px;top:1121px" width="29" height="32" viewBox="0 0 29 32" ><g opacity=".6"><g opacity="1"><path d="M1.0 1.0 H14.0 L20.0 7.0 V25.0 H1.0 Z" fill="url(#pg)" stroke="url(#gold)" stroke-width="2"/><path d="M14.0 1.0 V7.0 H20.0 Z" fill="#ecd9a0" stroke="url(#gold)" stroke-width="1.2"/></g></g><g opacity=".75"><path d="M9.5 7 Q7 7 7 9.5 V11.5 Q7 13 5.2 13 Q7 13 7 14.5 V17 Q7 19.5 9.5 19.5" fill="none" stroke="#6f93c4" stroke-width="1.5"/><path d="M10.5 11 H15.5 M10.5 15 H15.5" stroke="#6f93c4" stroke-width="1.5"/><path d="M11 21 H19 V17 L28 24 L19 31 V27 H11 Z" fill="#f3dfae" stroke="#cfa95a" stroke-width="1.5" stroke-linejoin="round"/></g></svg>
<div id="t23" class="t ui gray" style="left:389px;top:1122px;letter-spacing:-0.324px;">Declaration</div>
<svg style="left:532px;top:1123px" width="26" height="28" viewBox="0 0 26 28" ><g transform="translate(0 0)"><rect x="1.5" y="1.5" width="23" height="17.5" rx="1.5" fill="#fff" stroke="#3d6bb5" stroke-width="3"/><path d="M6.5 7.38 H15.6 M6.5 12.3 H20.28" stroke="#3b55a5" stroke-width="1.8"/><rect x="9.36" y="20.5" width="7.28" height="3" fill="#3d6bb5"/><rect x="3.64" y="23.5" width="18.72" height="2.4" fill="#3d6bb5"/></g></svg>
<div id="t24" class="t ui" style="left:569px;top:1122px;letter-spacing:-0.779px;">Console</div>
<svg style="left:667.5px;top:1126.5px" width="19.5" height="19.5" viewBox="0 0 19.5 19.5" ><path d="M0 3.9 L3.9 0 L9.75 5.85 L15.6 0 L19.5 3.9 L13.65 9.75 L19.5 15.6 L15.6 19.5 L9.75 13.65 L3.9 19.5 L0 15.6 L5.85 9.75 Z" fill="#fff" stroke="#5a5a5a" stroke-width="1.4" stroke-linejoin="round"/></svg>
<svg style="left:1503px;top:1117px" width="28" height="31" viewBox="0 0 28 31" ><g fill="#fbfbfb" stroke="#b4b4b4" stroke-width="1.6" stroke-dasharray="2.2 1.2" stroke-linejoin="round"><path d="M13 5 L21 1 L20.5 5 Q28.5 8 26 17 L20.5 16 Q22 11.5 17.5 10.5 L18 14.5 Z"/><path d="M13 5 L21 1 L20.5 5 Q28.5 8 26 17 L20.5 16 Q22 11.5 17.5 10.5 L18 14.5 Z" transform="rotate(180 14 15.5)"/></g></svg>
<svg style="left:1546px;top:1122px" width="22" height="22" viewBox="0 0 22 22" ><rect x="1" y="1" width="20" height="20" rx="2.5" fill="#d2d2d2" stroke="#b4b4b4" stroke-width="1.6"/><rect x="4" y="4" width="14" height="14" fill="#9b9b9b"/></svg>
<svg style="left:1583px;top:1119px" width="26" height="26" viewBox="0 0 26 26" ><g transform="translate(0 0)"><path d="M4.0 4.0 L22.0 22.0 M22.0 4.0 L4.0 22.0" stroke="#6e6e6e" stroke-width="8" stroke-linecap="round"/></g></svg>
<svg style="left:1620px;top:1116px" width="30" height="32" viewBox="0 0 30 32" ><g transform="translate(0 0)"><path d="M3.5 3.5 L18.5 18.5 M18.5 3.5 L3.5 18.5" stroke="#565656" stroke-width="7" stroke-linecap="round"/><path d="M3.5 3.5 L18.5 18.5 M18.5 3.5 L3.5 18.5" stroke="#dcdcdc" stroke-width="4.6" stroke-linecap="round"/></g><g transform="translate(8 10)"><path d="M3.75 3.75 L18.25 18.25 M18.25 3.75 L3.75 18.25" stroke="#636363" stroke-width="7.5" stroke-linecap="round"/></g></svg>
<div class="abs" style="left:1656px;top:1115px;width:1px;height:34px;background:#9d9d9d"></div>
<svg style="left:1667px;top:1116px" width="30" height="30" viewBox="0 0 30 30" ><g opacity=".75"><g opacity="1"><path d="M1.0 1.0 H14.0 L21.0 8.0 V27.0 H1.0 Z" fill="url(#pg)" stroke="url(#gold)" stroke-width="2"/><path d="M14.0 1.0 V8.0 H21.0 Z" fill="#ecd9a0" stroke="url(#gold)" stroke-width="1.2"/></g></g><path d="M4.5 9 H12 M4.5 13 H16 M4.5 17 H16 M4.5 21 H14" stroke="#4f6db5" stroke-width="1.8"/><g transform="translate(16 16)"><path d="M2.0 2.0 L12.0 12.0 M12.0 2.0 L2.0 12.0" stroke="#3c3c3c" stroke-width="4" stroke-linecap="round"/></g></svg>
<svg style="left:1705px;top:1118px" width="31" height="30" viewBox="0 0 31 30" ><rect x="4" y="1" width="26" height="26" fill="url(#win)" stroke="#5f86c0" stroke-width="2"/><path d="M3 1 H31" stroke="#a5965a" stroke-width="2"/><rect x="21" y="2" width="8" height="24" fill="#eaf2fb" stroke="#5f86c0" stroke-width="1.6"/><rect x="24" y="5" width="2.4" height="2.4" fill="#274a9a"/><rect x="24" y="21" width="2.4" height="2.4" fill="#274a9a"/><rect x="22" y="9.5" width="6" height="4" fill="#9db2d4"/><g transform="translate(0 11) scale(1.05)"><path d="M4 8 V5.2 Q4 1.2 8 1.2 Q12 1.2 12 5.2 V8" fill="none" stroke="#c9982e" stroke-width="2.4"/><rect x="1" y="7.5" width="14" height="10" rx="1.5" fill="url(#lock)" stroke="#b8801e" stroke-width="1.4"/><path d="M2.5 11 H13.5 M2.5 14 H13.5" stroke="#e0b04a" stroke-width="1"/><rect x="7" y="10.5" width="2" height="4" fill="#5a3a08"/></g></svg>
<svg style="left:1745px;top:1116px" width="30" height="30" viewBox="0 0 30 30" ><g opacity=".6"><g opacity="1"><path d="M1.0 1.0 H13.0 L20.0 8.0 V27.0 H1.0 Z" fill="url(#pg)" stroke="url(#gold)" stroke-width="2"/><path d="M13.0 1.0 V8.0 H20.0 Z" fill="#ecd9a0" stroke="url(#gold)" stroke-width="1.2"/></g></g><path d="M4.5 8 H12 M4.5 12 H15 M4.5 16 H12 M4.5 20 H15 M4.5 24 H12" stroke="#5f7cc0" stroke-width="1.8" opacity=".85"/><path d="M26 4 H29 V17 H19 V21 L11 15 L19 9 V13 H26 Z" fill="#f7e6b8" stroke="#d4a84e" stroke-width="1.5" stroke-linejoin="round" opacity=".9"/></svg>
<div class="sel" style="left:1779px;top:1113px;width:39px;height:37px"></div><div class="sel" style="left:1817px;top:1113px;width:40px;height:37px"></div>
<svg style="left:1785px;top:1118px" width="30" height="30" viewBox="0 0 30 30" ><g transform="translate(0 12)"><rect x="1.0" y="1.0" width="12" height="10.5" rx="1.5" fill="#fff" stroke="#4f7cc2" stroke-width="2"/><rect x="5.04" y="12.5" width="3.92" height="3" fill="#4f7cc2"/><rect x="1.96" y="15.5" width="10.08" height="2.4" fill="#4f7cc2"/></g><path d="M4 14 L22 6 L22 20 Z" fill="#6d88b4" opacity=".35"/><g transform="translate(7 0)"><rect x="1.1" y="1.1" width="20.8" height="15.8" rx="1.5" fill="#fff" stroke="#4f7cc2" stroke-width="2.2"/><path d="M5.75 6.48 H13.8 M5.75 10.8 H17.94" stroke="#3b55a5" stroke-width="1.8"/></g></svg>
<svg style="left:1824px;top:1118px" width="30" height="30" viewBox="0 0 30 30" ><g transform="translate(0 12)"><rect x="1.0" y="1.0" width="12" height="10.5" rx="1.5" fill="#fff" stroke="#4f7cc2" stroke-width="2"/><rect x="5.04" y="12.5" width="3.92" height="3" fill="#4f7cc2"/><rect x="1.96" y="15.5" width="10.08" height="2.4" fill="#4f7cc2"/></g><path d="M4 14 L22 6 L22 20 Z" fill="#6d88b4" opacity=".35"/><g transform="translate(7 0)"><rect x="1.1" y="1.1" width="20.8" height="15.8" rx="1.5" fill="#fff" stroke="#4f7cc2" stroke-width="2.2"/></g><path d="M10.5 4 L18.5 13 M18.5 4 L10.5 13" stroke="#e0353f" stroke-width="3.2"/><path d="M22 6 H27 M22 10.5 H27" stroke="#4a62b0" stroke-width="1.8"/></svg>
<div class="abs" style="left:1859px;top:1115px;width:1px;height:34px;background:#9d9d9d"></div>
<svg style="left:1872px;top:1118px" width="30" height="28" viewBox="0 0 30 28" ><rect x="1" y="9" width="24" height="18" fill="url(#win)" stroke="#8e9db8" stroke-width="2"/><rect x="0" y="8" width="26" height="4.5" fill="#3f88cf"/><path d="M0 8.6 H26" stroke="#2a64ae" stroke-width="1.2"/><path d="M13 16 L20 24" stroke="#9a9a9a" stroke-width="1.6"/><path d="M12.5 15.5 L16.5 11.5" stroke="#2a3a7a" stroke-width="2.2"/><path d="M14 8 Q13 3 18 4.5 L22 1.5 Q25 -0.5 27.5 3 Q29.5 6 26.5 8.5 L24 12.5 Q24.5 17 20 15.5 Z" fill="#2faa3c" stroke="#1f8a2c" stroke-width="1.2"/><path d="M20 4.5 L25 9.5" stroke="#7fe08a" stroke-width="1.6"/></svg>
<svg style="left:1912px;top:1118px" width="26" height="28" viewBox="0 0 26 28" ><g transform="translate(0 0)"><rect x="1.7" y="1.7" width="22.6" height="18.6" rx="1.5" fill="#efefef" stroke="#a3a3a3" stroke-width="3.4"/><path d="M6.5 7.92 H15.6 M6.5 13.2 H20.28" stroke="#a8a8a8" stroke-width="1.8"/><rect x="9.36" y="22" width="7.28" height="3" fill="#a3a3a3"/><rect x="3.64" y="25" width="18.72" height="2.4" fill="#a3a3a3"/></g></svg>
<svg style="left:1951px;top:1128px" width="14" height="8" viewBox="0 0 14 8" ><path d="M0 0 H14 L7.0 8 Z" fill="#737373"/></svg>
<svg style="left:1980px;top:1117px" width="31" height="29" viewBox="0 0 31 29" ><rect x="1" y="6" width="26" height="22" fill="url(#win)" stroke="#a58a4c" stroke-width="2"/><rect x="1" y="5" width="26" height="4.6" fill="#3f88cf"/><path d="M0 5 H28" stroke="#6a7890" stroke-width="1"/><path d="M8 27 Q22 26 24 14" fill="none" stroke="#f4dc9a" stroke-width="2.6" opacity=".9"/><path d="M23 0.5 L30 7.5 L23 14.5 L16 7.5 Z" fill="#fff7da" stroke="#b8902e" stroke-width="1.6"/><path d="M23 4 V11 M19.5 7.5 H26.5" stroke="#d9a93a" stroke-width="1.8"/></svg>
<svg style="left:2021px;top:1128px" width="14" height="8" viewBox="0 0 14 8" ><path d="M0 0 H14 L7.0 8 Z" fill="#1e1e1e"/></svg>
<div class="abs" style="left:2046px;top:1115px;width:1px;height:34px;background:#9d9d9d"></div>
<svg style="left:2059px;top:1118px" width="24" height="28" viewBox="0 0 24 28" ><g shape-rendering="crispEdges"><rect x="5" y="5" width="18" height="22" fill="#fff" stroke="#0a22ff" stroke-width="2"/><rect x="1" y="1" width="18" height="22" fill="#fff" stroke="#0a22ff" stroke-width="2"/><rect x="4" y="5" width="4" height="2" fill="#ff1020"/><rect x="10" y="5" width="6" height="2" fill="#000"/><rect x="4" y="9" width="6" height="2" fill="#000"/><rect x="12" y="9" width="4" height="2" fill="#0a7a10"/><rect x="4" y="13" width="4" height="2" fill="#ffa800"/><rect x="10" y="13" width="6" height="2" fill="#000"/><rect x="4" y="17" width="6" height="2" fill="#0a7a10"/><rect x="12" y="17" width="4" height="2" fill="#ff1020"/></g></svg>
<svg style="left:2093px;top:1116px" width="32" height="32" viewBox="0 0 32 32" ><path d="M29 9.5 Q25 1.5 16 1.5 Q3 2.5 2 15.5 Q2.5 28.5 15.5 30 Q25 30 29 22.5" fill="none" stroke="#1a35ff" stroke-width="2.6" stroke-dasharray="4 .6"/><path d="M25.5 8 L29.5 9.8 L29 5.5" fill="none" stroke="#1a35ff" stroke-width="2"/><path d="M7.5 27 L15 4 H17.5 L25 27" fill="none" stroke="#ff0a14" stroke-width="4.2" stroke-linejoin="miter"/><path d="M10 20.5 H23" stroke="#ff0a14" stroke-width="3.6"/></svg>
<svg style="left:2139px;top:1122px" width="19" height="7" viewBox="0 0 19 7" ><rect x=".7" y=".7" width="17.6" height="5.6" fill="#fff" stroke="#5a5a5a" stroke-width="1.4"/></svg>
<svg style="left:2178px;top:1122px" width="18.5" height="18.5" viewBox="0 0 18.5 18.5" ><rect x=".7" y=".7" width="17.1" height="17.1" fill="#fff" stroke="#5a5a5a" stroke-width="1.4"/><path d="M.7 4.4 H17.8" stroke="#5a5a5a" stroke-width="1.4"/></svg>
<div id="t25" class="t ui" style="left:43px;top:1167px;letter-spacing:0.311px;">&lt;terminated&gt;</div>
<div id="t26" class="t ui" style="left:200.5px;top:1167px;letter-spacing:-0.042px;">MemberTests.testMe</div>
<div id="t27" class="t ui" style="left:433px;top:1167px;letter-spacing:-0.618px;">[JUnit]</div>
<div id="t28" class="t ui" style="left:507px;top:1167px;letter-spacing:-2.667px;">C:</div>
<div id="t29" class="t ui" style="left:528.5px;top:1167px;letter-spacing:0.000px;transform:scaleX(.885);transform-origin:0 0">₩</div>
<div id="t30" class="t ui" style="left:549.5px;top:1167px;letter-spacing:-1.082px;">Program</div>
<div id="t31" class="t ui" style="left:645.5px;top:1167px;letter-spacing:-1.260px;">Files</div>
<div id="t32" class="t ui" style="left:689.5px;top:1167px;letter-spacing:0.000px;transform:scaleX(.885);transform-origin:0 0">₩</div>
<div id="t33" class="t ui" style="left:710.5px;top:1167px;letter-spacing:-2.201px;">Java</div>
<div id="t34" class="t ui" style="left:753px;top:1167px;letter-spacing:0.000px;transform:scaleX(.885);transform-origin:0 0">₩</div>
<div id="t35" class="t ui" style="left:773.5px;top:1167px;letter-spacing:-0.952px;">jre1.8.0_202</div>
<div id="t36" class="t ui" style="left:895px;top:1167px;letter-spacing:0.000px;transform:scaleX(.885);transform-origin:0 0">₩</div>
<div id="t37" class="t ui" style="left:915.5px;top:1167px;letter-spacing:0.588px;">bin</div>
<div id="t38" class="t ui" style="left:948.5px;top:1167px;letter-spacing:0.000px;transform:scaleX(.885);transform-origin:0 0">₩</div>
<div id="t39" class="t ui" style="left:969px;top:1167px;letter-spacing:-0.812px;">javaw.exe</div>
<div id="t40" class="t ui" style="left:1078.5px;top:1167px;letter-spacing:-1.375px;">(2023.</div>
<div id="t41" class="t ui" style="left:1150.5px;top:1167px;letter-spacing:-3.010px;">3.</div>
<div id="t42" class="t ui" style="left:1178px;top:1167px;letter-spacing:-2.550px;">16.</div>
<div id="t43" class="t ui" style="left:1271px;top:1167px;letter-spacing:-1.010px;">3:05:36)</div>
<svg style="left:1214px;top:1166px" width="46" height="29.4" viewBox="0 0 52 32" preserveAspectRatio="none"><g fill="none" stroke="#000" stroke-width="1.9"><path transform="translate(0 0)" d="M5.0 10.0 a8.0 5.5 0 1 0 16.0 0 a8.0 5.5 0 1 0 -16.0 0"/>
<path transform="translate(0 0)" d="M1.5 25.5 L24.5 25.5"/>
<path transform="translate(0 0)" d="M13.0 18.0 L13.0 25.5"/>
<path transform="translate(26 0)" d="M9.4 4.5 L16.6 4.5"/>
<path transform="translate(26 0)" d="M4.0 7.7 L22.0 7.7"/>
<path transform="translate(26 0)" d="M7.1 12.3 a5.9 2.7 0 1 0 11.9 0 a5.9 2.7 0 1 0 -11.9 0"/>
<path transform="translate(26 0)" d="M1.5 19.5 L24.5 19.5"/>
<path transform="translate(26 0)" d="M13.0 19.5 L13.0 28.5"/></g></svg>
<div class="hr" style="left:40px;top:1197px;width:2180px"></div>
<div class="abs" style="left:36px;top:1198px;width:2149px;height:277px;overflow:hidden"><div class="code" style="left:8px;top:1px">INFO : org.springframework.test.context.support.DefaultTestContextBootstrapper – Loaded default TestExecutionListener class names from location [META–INF/spring.factories]</div><div class="code" style="left:8px;top:33px">INFO : org.springframework.test.context.support.DefaultTestContextBootstrapper – Using TestExecutionListeners: [org.springframework.test.context.web.ServletTestExecutionListener@5d76b067, org.springframework</div><div class="code" style="left:8px;top:65px">INFO : org.springframework.beans.factory.xml.XmlBeanDefinitionReader – Loading XML bean definitions from URL [file:src/main/webapp/WEB–INF/spring/root–context.xml]</div><div class="code" style="left:8px;top:97px">INFO : org.springframework.context.support.GenericApplicationContext – Refreshing org.springframework.context.support.GenericApplicationContext@10bdf5e5: startup date [Thu Mar 16 15:05:37 KST 2023]; root</div><div class="code" style="left:8px;top:129px">INFO : org.springframework.beans.factory.annotation.AutowiredAnnotationBeanPostProcessor – JSR–330 'javax.inject.Inject' annotation found and supported for autowiring</div><div class="code" style="left:8px;top:161px">Hello Test</div><div class="code" style="left:8px;top:193px">INFO : org.springframework.context.support.GenericApplicationContext – Closing org.springframework.context.support.GenericApplicationContext@10bdf5e5: startup date [Thu Mar 16 15:05:37 KST 2023]; root of context</div></div>
<div class="abs" style="left:2185px;top:1198px;width:40px;height:277px;background:#f0f0f0;"></div>
<div class="abs" style="left:40px;top:1475px;width:2180px;height:20px;background:#f0f0f0;"></div>
<div class="abs" style="left:74px;top:1475px;width:533px;height:20px;background:#c1c1c1;"></div>
<svg style="left:2194.5px;top:1212.5px" width="14" height="14" viewBox="0 0 14 14" ><path d="M1 8.2 L6 1.5 L11 8.2" fill="none" stroke="#bdbdbd" stroke-width="2.8"/></svg>
<svg style="left:2194.5px;top:1452.5px" width="14" height="14" viewBox="0 0 14 14" ><path d="M1 1.5 L6 8.2 L11 1.5" fill="none" stroke="#bdbdbd" stroke-width="2.8"/></svg>
</div>
</body>
</html>
